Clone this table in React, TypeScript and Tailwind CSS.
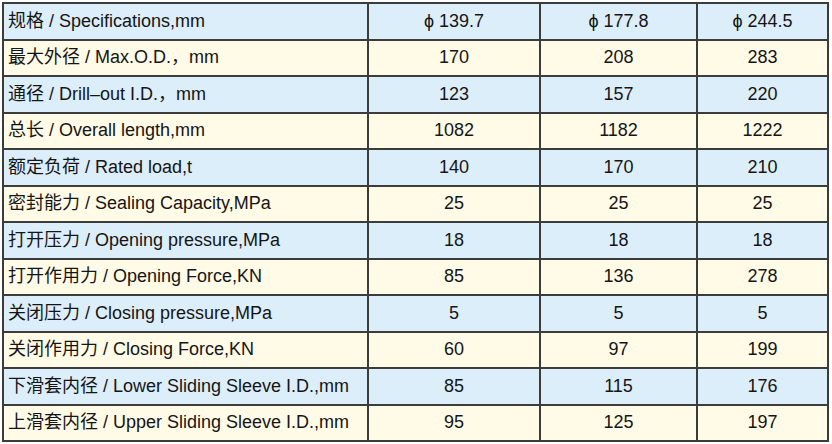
import React from "react";

const rows: [string, string, string, string][] = [
  ["规格 / Specifications,mm", "ϕ 139.7", "ϕ 177.8", "ϕ 244.5"],
  ["最大外径 / Max.O.D.，mm", "170", "208", "283"],
  ["通径 / Drill–out I.D.，mm", "123", "157", "220"],
  ["总长 / Overall length,mm", "1082", "1182", "1222"],
  ["额定负荷 / Rated load,t", "140", "170", "210"],
  ["密封能力 / Sealing Capacity,MPa", "25", "25", "25"],
  ["打开压力 / Opening pressure,MPa", "18", "18", "18"],
  ["打开作用力 / Opening Force,KN", "85", "136", "278"],
  ["关闭压力 / Closing pressure,MPa", "5", "5", "5"],
  ["关闭作用力 / Closing Force,KN", "60", "97", "199"],
  ["下滑套内径 / Lower Sliding Sleeve I.D.,mm", "85", "115", "176"],
  ["上滑套内径 / Upper Sliding Sleeve I.D.,mm", "95", "125", "197"],
];

export default function App() {
  return (
    <div className="w-[832px] h-[444px] bg-white pl-[2px] pt-[2px] overflow-hidden">
      <div
        className="grid w-[827px] bg-[#3c3c3c] p-[2px] gap-[2px] grid-cols-[363px_170px_155px_129px] grid-rows-[repeat(12,34.5px)] text-[18px] text-[#151515]"
        style={{ fontFamily: '"Liberation Sans", Arial, "Noto Sans CJK SC", sans-serif' }}
      >
        {rows.map((r, i) => {
          const bg = i % 2 === 0 ? "bg-[#ddeefb]" : "bg-[#fffbe7]";
          return (
            <React.Fragment key={i}>
              <div className={`${bg} flex items-center pl-[4px] whitespace-nowrap`}>{r[0]}</div>
              <div className={`${bg} flex items-center justify-center`}>{r[1]}</div>
              <div className={`${bg} flex items-center justify-center`}>{r[2]}</div>
              <div className={`${bg} flex items-center justify-center`}>{r[3]}</div>
            </React.Fragment>
          );
        })}
      </div>
    </div>
  );
}
